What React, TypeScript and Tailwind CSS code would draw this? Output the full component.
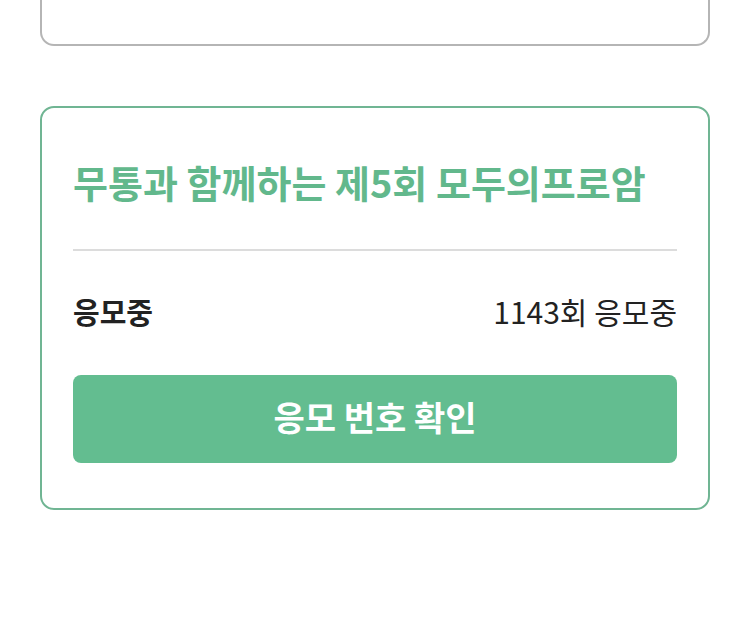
import React from "react";

const FONT = { fontFamily: '"Noto Sans CJK KR", "Noto Sans", sans-serif' };

export default function App() {
  return (
    <div className="min-h-screen w-full bg-white" style={FONT}>
      {/* previous card, scrolled mostly out of view */}
      <div className="mx-10 h-[46px] rounded-b-[14px] border-2 border-t-0 border-[#b5b5b5]" />

      {/* event card */}
      <section className="mx-10 mt-[60px] rounded-[14px] border-2 border-[#70b593] px-[31px] pt-[50px] pb-[45px]">
        <h2 className="text-[38px] font-bold leading-[48px] text-[#62b88c]">
          무통과 함께하는 제5회 모두의프로암
        </h2>

        <div className="mt-[43px] h-[2px] bg-[#dcdcdc]" />

        <div className="mt-[42px] flex items-center justify-between leading-[36px] text-[#222]">
          <span className="text-[29px] font-bold">응모중</span>
          <span className="text-[30px]">1143회 응모중</span>
        </div>

        <button className="mt-[46px] flex h-[88px] w-full items-center justify-center rounded-[8px] bg-[#63bd90] pb-[5px] text-[34px] font-semibold text-white">
          응모 번호 확인
        </button>
      </section>
    </div>
  );
}
